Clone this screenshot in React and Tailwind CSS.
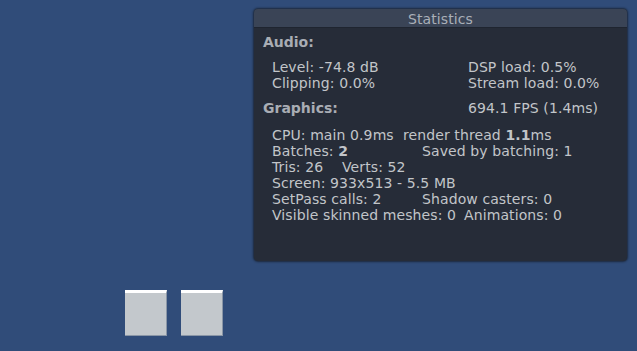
export default function App() {
  const font = { fontFamily: '"DejaVu Sans", sans-serif' };
  return (
    <div className="relative w-[637px] h-[351px] bg-[#304c79] overflow-hidden" style={font}>
      {/* Stats panel */}
      <div className="absolute left-[254px] top-[9px] w-[373px] h-[252px] rounded-[4px] bg-[#262c38] shadow-[0_0_2px_1px_rgba(20,25,35,0.7)] overflow-hidden text-[14px] leading-[16px] text-[#c2c5c9] tracking-[0.1px]">
        <div className="h-[19px] bg-[#3a4456] border-b border-[#1f2530] flex items-center justify-center text-[14px] text-[#a9afb8] pt-[1px]">
          Statistics
        </div>
        <div className="pt-[6px]">
          <div className="pl-[9px] font-bold text-[#a9adb4] tracking-normal">Audio:</div>
          <div className="mt-[9px] pl-[18px]">
            <div className="flex"><span className="w-[196px]">Level: -74.8 dB</span><span>DSP load: 0.5%</span></div>
            <div className="flex"><span className="w-[196px]">Clipping: 0.0%</span><span>Stream load: 0.0%</span></div>
          </div>
          <div className="mt-[9px] flex">
            <span className="pl-[9px] w-[214px] font-bold text-[#a9adb4] tracking-normal">Graphics:</span>
            <span>694.1 FPS (1.4ms)</span>
          </div>
          <div className="mt-[11px] pl-[18px]">
            <div className="flex whitespace-pre"><span className="w-[131px]">CPU: main 0.9ms</span><span>render thread <b>1.1</b>ms</span></div>
            <div className="flex whitespace-pre"><span className="w-[150px]">Batches: <b>2</b></span><span>Saved by batching: 1</span></div>
            <div className="flex whitespace-pre"><span className="w-[70px]">Tris: 26</span><span>Verts: 52</span></div>
            <div className="whitespace-pre">Screen: 933x513 - 5.5 MB</div>
            <div className="flex whitespace-pre"><span className="w-[150px]">SetPass calls: 2</span><span>Shadow casters: 0</span></div>
            <div className="flex whitespace-pre"><span className="w-[192px]">Visible skinned meshes: 0</span><span>Animations: 0</span></div>
          </div>
        </div>
      </div>

      {/* Cubes */}
      <div className="absolute left-[125px] top-[290px] flex gap-[14px]">
        <div className="w-[42px] h-[46px] bg-[#c3c8cc] border-t-[3px] border-white border-r border-b border-r-[#8a96a6] border-b-[#8a96a6]" />
        <div className="w-[42px] h-[46px] bg-[#c3c8cc] border-t-[3px] border-white border-r border-b border-r-[#8a96a6] border-b-[#8a96a6]" />
      </div>
    </div>
  );
}
